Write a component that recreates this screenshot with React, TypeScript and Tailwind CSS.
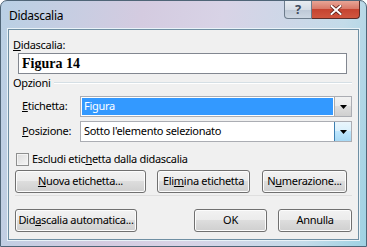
import React from 'react';

const font = { fontFamily: '"Noto Sans", "Liberation Sans", sans-serif', letterSpacing: '-0.3px' };

function WinButton({ children, className = '' }: { children: React.ReactNode; className?: string }) {
  return (
    <div
      className={`h-[23px] flex items-center justify-center whitespace-nowrap rounded-[3px] border border-[#707070] text-[11px] text-black bg-[linear-gradient(to_bottom,#f2f2f2_0%,#ebebeb_49%,#dddddd_50%,#cfcfcf_100%)] shadow-[inset_0_0_0_1px_#fcfcfc] ${className}`}
    >
      {children}
    </div>
  );
}

function Combo({ text, selected, hot }: { text: string; selected?: boolean; hot?: boolean }) {
  return (
    <div className="h-[21px] w-[272px] flex border border-[#abadb3] bg-white">
      <div className="flex-1 p-[1px]">
        <div className={`h-full flex items-center pl-[2px] text-[11px] whitespace-nowrap ${selected ? 'bg-[#3399ff] text-white' : 'text-black'}`}>
          {text}
        </div>
      </div>
      <div
        className={`w-[17px] flex items-center justify-center border-l ${
          hot
            ? 'border-[#3c7fb1] bg-[linear-gradient(to_bottom,#eaf6fd_0%,#d9f0fc_49%,#bee6fd_50%,#a7d9f5_100%)]'
            : 'border-[#acacac] bg-[linear-gradient(to_bottom,#f2f2f2_0%,#ebebeb_49%,#dddddd_50%,#cfcfcf_100%)]'
        }`}
      >
        <svg width="7" height="4" viewBox="0 0 7 4">
          <path d="M0 0 H7 L3.5 4 Z" fill="#000" />
        </svg>
      </div>
    </div>
  );
}

export default function App() {
  return (
    <div
      style={font}
      className="w-[367px] h-[247px] flex flex-col rounded-t-[7px] border border-[#4f6577] bg-[linear-gradient(100deg,#b9d0e4_0%,#d4cbe0_35%,#d8d3e6_55%,#c3dbe9_85%,#9fd2e3_100%)]"
    >
      {/* Title bar */}
      <div className="h-[28px] flex justify-between">
        <div className="pl-[8px] pt-[6px] text-[12px] text-black">Didascalia</div>
        <div className="flex h-[18px] mr-[6px]">
          <div className="w-[28px] flex items-center justify-center rounded-bl-[4px] border border-t-0 border-[#6d7c8c] bg-[linear-gradient(to_bottom,#e8ecf1_0%,#d5dce5_50%,#bdc8d6_51%,#cdd7e3_100%)] text-[13px] font-bold text-[#3e4b5c]">
            ?
          </div>
          <div className="w-[48px] flex items-center justify-center rounded-br-[4px] border border-t-0 border-l-0 border-[#5b2c28] bg-[linear-gradient(to_bottom,#e8a596_0%,#d97a69_45%,#c64431_50%,#d0563f_100%)]">
            <svg width="12" height="10" viewBox="0 0 12 10">
              <path d="M1.5 1 L10.5 9 M10.5 1 L1.5 9" stroke="#5a1d15" strokeWidth="3.6" strokeLinecap="square" />
              <path d="M1.5 1 L10.5 9 M10.5 1 L1.5 9" stroke="#ffffff" strokeWidth="2" strokeLinecap="square" />
            </svg>
          </div>
        </div>
      </div>

      {/* Client area */}
      <div className="mx-[7px] h-[211px] flex flex-col border border-[#6f8fa3] bg-[#f0f0f0] text-[11px] text-black whitespace-nowrap shadow-[0_0_0_1px_#e9f3f8]">
        <div className="mt-[7px] ml-[4px] h-[15px] leading-[15px]">
          <span className="underline">D</span>idascalia:
        </div>
        <div className="mt-[1px] ml-[9px] w-[329px] h-[21px] flex items-center border border-[#828790] bg-white pl-[3px]">
          <span className="text-[14px] font-bold tracking-normal" style={{ fontFamily: '"Liberation Serif", serif' }}>
            Figura 14
          </span>
        </div>

        <div className="mt-[2px] ml-[4px] mr-[6px] h-[14px] flex items-center gap-[4px]">
          <span className="leading-[14px]">Opzioni</span>
          <div className="flex-1 h-[2px] border-t border-b border-t-[#d5dfe5] border-b-white" />
        </div>

        <div className="mt-[6px] ml-[13px] flex items-center">
          <div className="w-[58px]">
            <span className="underline">E</span>tichetta:
          </div>
          <Combo text="Figura" selected />
        </div>
        <div className="mt-[4px] ml-[13px] flex items-center">
          <div className="w-[58px]">
            <span className="underline">P</span>osizione:
          </div>
          <Combo text="Sotto l'elemento selezionato" hot />
        </div>

        <div className="mt-[10px] ml-[7px] h-[15px] flex items-center gap-[3px]">
          <div className="w-[13px] h-[13px] border border-[#8e8f8f] bg-[linear-gradient(135deg,#dcdcdc_0%,#f5f5f5_100%)] shadow-[inset_0_0_0_1px_#f4f4f4]" />
          <span>
            Escludi etic<span className="underline">h</span>etta dalla didascalia
          </span>
        </div>

        <div className="mt-[3px] ml-[6px] flex">
          <WinButton className="w-[131px]">
            <span>
              <span className="underline">N</span>uova etichetta...
            </span>
          </WinButton>
          <WinButton className="w-[93px] ml-[11px]">
            <span>
              Eli<span className="underline">m</span>ina etichetta
            </span>
          </WinButton>
          <WinButton className="w-[85px] ml-[12px]">
            <span>
              N<span className="underline">u</span>merazione...
            </span>
          </WinButton>
        </div>

        <div className="mt-[2px] ml-[6px] w-[337px] h-[1px] bg-[#dfdfdf]" />

        <div className="mt-[13px] ml-[6px] flex">
          <WinButton className="w-[122px]">
            <span>
              Did<span className="underline">a</span>scalia automatica...
            </span>
          </WinButton>
          <WinButton className="w-[73px] ml-[57px]">OK</WinButton>
          <WinButton className="w-[74px] ml-[11px]">Annulla</WinButton>
        </div>
      </div>
    </div>
  );
}
